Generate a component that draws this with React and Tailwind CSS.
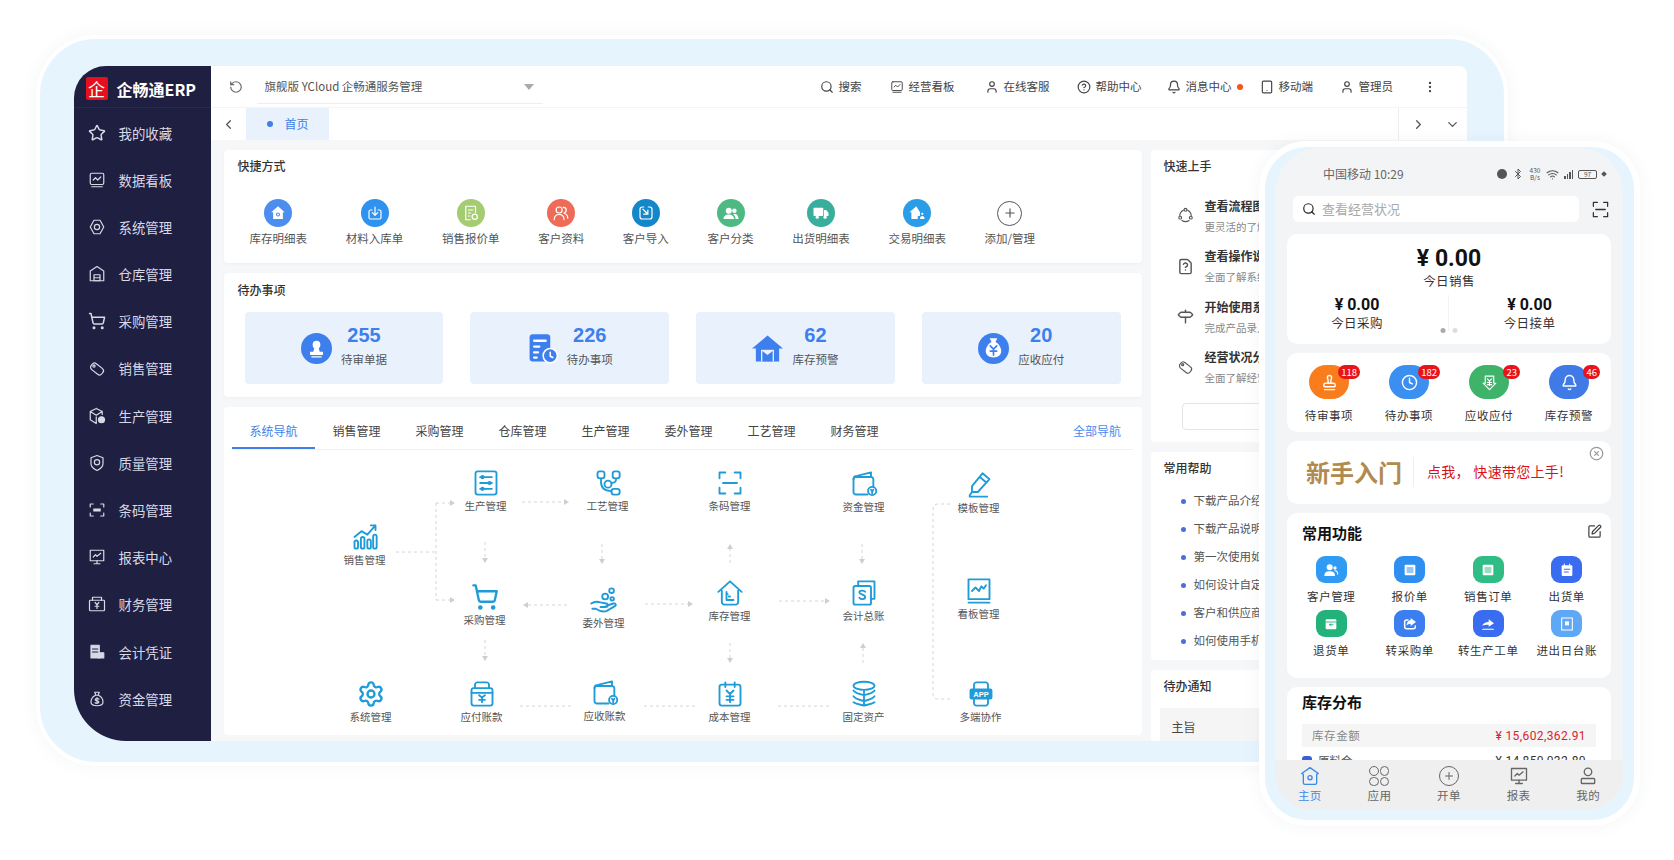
import {
  Star, ShoppingCart, ChevronLeft, ChevronRight, ChevronDown, RotateCw,
  Search, CircleHelp, Bell, Tablet, User, EllipsisVertical, Plus,
  Bluetooth, Wifi, SquarePen, CircleX, Clock, FileQuestion, Signpost, Settings, Stamp,
} from "lucide-react";

// small hand drawn icons, everything on a 24 box
const Svg = ({ className = "", children }) => (
  <svg viewBox="0 0 24 24" fill="none" stroke="currentColor" strokeWidth="1.6" strokeLinecap="round" strokeLinejoin="round" className={className}>
    {children}
  </svg>
);

// sidebar
const BoardIcon = (p) => (
  <Svg {...p}><rect x="3" y="3" width="18" height="15" rx="2" /><path d="M7 12l3-3 3 3 4-4M5 21h14" /></Svg>
);
const HexIcon = (p) => (
  <Svg {...p}><path d="M8 3h8l5 9-5 9H8l-5-9z" /><circle cx="12" cy="12" r="3.500" /></Svg>
);
const WarehouseIcon = (p) => (
  <Svg {...p}><path d="M12 2l9 6v13H3V8z" /><path d="M8 13h8v8H8zM8 17h8" /></Svg>
);
const DoubleTagIcon = (p) => (
  <Svg {...p}><rect x="3" y="7" width="18" height="10" rx="4" transform="rotate(38 12 12)" /><circle cx="8" cy="8" r="1.500" /></Svg>
);
const CubeIcon = (p) => (
  <Svg {...p}><path d="M11 2l8 4v4M11 2L3 6v11l8 5v-9M3 6l8 5 8-5" /><circle cx="18" cy="17" r="4" fill="currentColor" /></Svg>
);
const ShieldIcon = (p) => (
  <Svg {...p}><path d="M12 2l8 3v8c0 4-4 7-8 9-4-2-8-5-8-9V5z" /><circle cx="12" cy="11" r="3.500" /></Svg>
);
const ScanBarIcon = (p) => (
  <Svg {...p}><path d="M3 8V4h4M17 4h4v4M21 16v4h-4M7 20H3v-4" /><rect x="7" y="10" width="10" height="4" fill="currentColor" stroke="none" /></Svg>
);
const ScanIcon = (p) => (
  <Svg {...p}><path d="M3 8V3h5M16 3h5v5M21 16v5h-5M8 21H3v-5M6 12h12" /></Svg>
);
const ReportIcon = (p) => (
  <Svg {...p}><rect x="3" y="3" width="18" height="14" /><path d="M7 12l3-3 2 2 5-4M12 17v4M8 21h8" /></Svg>
);
const FinanceIcon = (p) => (
  <Svg {...p}><path d="M6 7V3h12v4" /><rect x="2" y="7" width="20" height="14" rx="1" /><path d="M9.500 10l2.500 3 2.500-3M12 13v5M9.500 15h5" /></Svg>
);
const VoucherIcon = (p) => (
  <Svg {...p}><rect x="4" y="3" width="11" height="17" fill="currentColor" /><rect x="14" y="13" width="7" height="7" fill="currentColor" /><path d="M6 8h7M6 12h7" stroke="#1f1f42" /></Svg>
);
const MoneyBagIcon = (p) => (
  <Svg {...p}><path d="M9 3h6l-1.500 4h-3zM10 7c-4 2-6 6-6 9 0 3 3 5 8 5s8-2 8-5c0-3-2-7-6-9" /><path d="M12 10v8M14.500 12c-1-1-5-1-5 1s5 1 5 3-4 2-5 1" /></Svg>
);

// navigation diagram
const SalesIcon = (p) => (
  <Svg {...p}><path d="M3 12l6-5 5 3 7-8M17 2h4v4" /><rect x="3" y="15" width="3" height="7" rx="1.500" /><rect x="8.500" y="12" width="3" height="10" rx="1.500" /><rect x="14" y="14" width="3" height="8" rx="1.500" /><rect x="19" y="10" width="3" height="12" rx="1.500" /></Svg>
);
const ProduceIcon = (p) => (
  <Svg {...p}><rect x="3" y="2" width="18" height="20" rx="2" /><path d="M7 7h10M7 12h10M7 17h10" /><circle cx="9" cy="7" r="1" /><circle cx="15" cy="12" r="1" /><circle cx="9" cy="17" r="1" /></Svg>
);
const CraftIcon = (p) => (
  <Svg {...p}><rect x="3" y="2" width="6" height="6" rx="2" /><rect x="16" y="2" width="6" height="6" rx="2" /><rect x="9" y="10" width="6" height="6" rx="3" /><rect x="15" y="17" width="7" height="5" rx="2" /><path d="M6 8v3c0 5 3 8 9 8M15 12c3 0 4-1 4-4" /></Svg>
);
const OutsourceIcon = (p) => (
  <Svg {...p}><circle cx="13" cy="9" r="2.500" /><circle cx="18.500" cy="4" r="2" /><circle cx="19" cy="11" r="1.500" /><path d="M1 15c3-2 5-2 8-1l5 1c2 0 2 3-1 3H9M14 17l6-2c2-.5 3 1.500 1 2.500l-7 4c-3 1-6 0-9-2H2" /></Svg>
);
const WalletIcon = (p) => (
  <Svg {...p}><path d="M3 8c0-2 1-3 3-3l12-3v4" /><path d="M20 14V8c0-1-1-2-2-2H5C4 6 3 7 3 8v11c0 1 1 2 2 2h10" /><circle cx="19" cy="18" r="3.500" /><path d="M18 17l1 1.500 1-1.500M19 18.500V20" /></Svg>
);
const StockIcon = (p) => (
  <Svg {...p}><path d="M2 11l10-9 10 9" /><path d="M5 10v10c0 1 1 2 2 2h10c1 0 2-1 2-2V10" /><path d="M9 11v7h6M9 13h1M11 15h1" /></Svg>
);
const LedgerIcon = (p) => (
  <Svg {...p}><path d="M7 5V2h14v15h-3" /><rect x="3" y="6" width="15" height="16" rx="1.500" /><path d="M13 11c-1-1.500-5-1.500-5 .5s5 1.500 5 4-4 2-5 .5" /></Svg>
);
const KanbanIcon = (p) => (
  <Svg {...p}><rect x="3" y="2" width="18" height="17" /><path d="M6 12l3-3 3 3 2-4 2 2 2-3M3 22h18" /></Svg>
);
const PencilIcon = (p) => (
  <Svg {...p}><path d="M15 2l6 5-10 11H6v-5zM12.500 5l6 5M6 18l-2 3" /><path d="M4 22h15" /></Svg>
);
const PayableIcon = (p) => (
  <Svg {...p}><path d="M6 7V4c0-1 1-2 2-2h8c1 0 2 1 2 2v3" /><rect x="3" y="7" width="18" height="15" rx="2" /><path d="M3 11h18M9.500 13l2.500 2 2.500-2M12 15v4M9.500 17h5" /></Svg>
);
const CostIcon = (p) => (
  <Svg {...p}><rect x="3" y="4" width="18" height="18" rx="2" /><path d="M8 2v4M16 2v4M9 9l3 3 3-3M12 12v7M9 14h6M9 17h6" /></Svg>
);
const AssetIcon = (p) => (
  <Svg {...p}><ellipse cx="12" cy="5" rx="9" ry="3.500" /><path d="M3 9c2 3 6 3 9 4 3-1 7-1 9-4M3 14c2 3 6 3 9 4 3-1 7-1 9-4M3 19c3 2 6 2 9 3 3-1 6-1 9-3M12 9v13" /></Svg>
);
const MultiIcon = (p) => (
  <Svg {...p}><path d="M6 8V4c0-1 1-2 2-2h8c1 0 2 1 2 2v4M6 16v4c0 1 1 2 2 2h8c1 0 2-1 2-2v-4" /><rect x="3" y="8" width="18" height="8" rx="1" fill="currentColor" /><text x="12" y="14.500" textAnchor="middle" fontSize="6.500" fontWeight="700" fill="#fff" stroke="none" fontFamily="Liberation Sans">APP</text></Svg>
);

// shortcuts row, white on a colored circle
const HouseSearchIcon = (p) => (
  <Svg {...p}><path d="M12 3L3 11h2.500v9h13v-9H21z" fill="#fff" stroke="none" /><circle cx="12" cy="14" r="2" stroke="#4b8ef0" strokeWidth="1.400" /></Svg>
);
const TrayIcon = (p) => (
  <Svg {...p}><path d="M8 8H6a2 2 0 0 0-2 2v8a2 2 0 0 0 2 2h12a2 2 0 0 0 2-2v-8a2 2 0 0 0-2-2h-2M12 4v11M8.500 11.500L12 15l3.500-3.500" /></Svg>
);
const DocClockIcon = (p) => (
  <Svg {...p}><path d="M18 11V3H5v18h6M8.500 8h6M8.500 12h3M8.500 16h2" /><circle cx="17" cy="17" r="3.500" /></Svg>
);
const TwoPeopleIcon = (p) => (
  <Svg {...p}><circle cx="9.500" cy="8" r="4" /><path d="M3 21c0-5 2-7 6.500-7s6.500 2 6.500 7M15 4.500c2.500 0 4 1.500 4 3.500s-1 3.500-3 4c3 1 5 3 5 7" /></Svg>
);
const ImportIcon = (p) => (
  <Svg {...p}><path d="M9 4H7a3 3 0 0 0-3 3v10a3 3 0 0 0 3 3h10a3 3 0 0 0 3-3V7a3 3 0 0 0-3-3h-2" /><path d="M8 7l6 6M14.500 8v5.500H9" /></Svg>
);
const PeopleFillIcon = (p) => (
  <Svg {...p}><circle cx="9" cy="9" r="4" fill="#fff" stroke="none" /><path d="M2 20c0-4 3-6 7-6s7 2 7 6z" fill="#fff" stroke="none" /><circle cx="16.500" cy="9" r="3" fill="#fff" stroke="none" /><path d="M17 13c3 0 5 3 5 7h-4c0-3-1-5-3-6z" fill="#fff" stroke="none" /></Svg>
);
const TruckFillIcon = (p) => (
  <Svg {...p}><rect x="2" y="5" width="13" height="11" rx="1" fill="#fff" stroke="none" /><path d="M16 8h3l3 4v4h-6z" fill="#fff" stroke="none" /><circle cx="7" cy="17.500" r="2.200" fill="#fff" stroke="none" /><circle cx="17.500" cy="17.500" r="2.200" fill="#fff" stroke="none" /></Svg>
);
const HouseFillIcon = (p) => (
  <Svg {...p}><path d="M11 3L2 11h2.500v9H13v-4h3v-5z" fill="#fff" stroke="none" /><circle cx="19" cy="13" r="1.500" fill="#fff" stroke="none" /><path d="M16 20c0-3 1-4 3-4s3 1 3 4z" fill="#fff" stroke="none" /></Svg>
);

// todo cards, solid blue
const TodoStamp = (p) => (
  <Svg {...p}><circle cx="12" cy="12" r="12" fill="#3d7fec" stroke="none" /><circle cx="12" cy="9" r="3" fill="#fff" stroke="none" /><path d="M10.500 11h3l1 3.500h-5zM7 14.500h10V17H7zM8 18h8v1H8z" fill="#fff" stroke="none" /></Svg>
);
const TodoDoc = (p) => (
  <Svg {...p}><rect x="2" y="1" width="16" height="21" rx="2.500" fill="#3d7fec" stroke="none" /><path d="M5.500 6h9M5.500 10.500h4M5.500 15h3M5.500 19h2" stroke="#fff" strokeWidth="1.800" /><circle cx="18" cy="17.500" r="5.500" fill="#3d7fec" stroke="#fff" strokeWidth="1.200" /><path d="M18 15v3l2 1" stroke="#fff" strokeWidth="1.200" /></Svg>
);
const TodoHouse = (p) => (
  <Svg {...p}><path d="M12 2L0 12h3v10h18V12h3z" fill="#3d7fec" stroke="none" /><rect x="7" y="13" width="10" height="9" fill="#e9f1fd" stroke="none" /><path d="M8 22v-8l4 3 4-3v8z" fill="#3d7fec" stroke="none" /></Svg>
);
const TodoBag = (p) => (
  <Svg {...p}><circle cx="12" cy="12" r="12" fill="#3d7fec" stroke="none" /><path d="M9 4h6l-1.500 3c3 1.500 4.500 5 4.500 7 0 3-2.500 5-6 5s-6-2-6-5c0-2 1.500-5.500 4.500-7z" fill="#fff" stroke="none" /><path d="M9.500 10l2.500 2.500 2.500-2.500M12 12.500V17M9.500 14h5" stroke="#3d7fec" strokeWidth="1.300" /></Svg>
);

// phone
const PhoneDoc = ({ className, line }) => (
  <Svg className={className}><rect x="4" y="4" width="16" height="16" rx="1.500" fill="#fff" stroke="none" /><path d="M7.500 9h9M7.500 12h9M7.500 15h9" stroke={line} /></Svg>
);
const QuoteIcon = (p) => <PhoneDoc {...p} line="#2f8ff0" />;
const OrderIcon = (p) => <PhoneDoc {...p} line="#2fbd85" />;
const ShipIcon = (p) => (
  <Svg {...p}><rect x="4" y="5" width="16" height="16" rx="1.500" fill="#fff" stroke="none" /><path d="M8 11h8M8 15h6" stroke="#3a6cf0" /><path d="M8 3v2M16 3v2" stroke="#fff" /></Svg>
);
const ReturnIcon = (p) => (
  <Svg {...p}><rect x="4" y="5" width="16" height="15" rx="1.500" fill="#fff" stroke="none" /><path d="M4 9h16M10 13l2-1.500M10 13l2 1.500M10 13h5" stroke="#22b27a" strokeWidth="1.300" /></Svg>
);
const ShareBoxIcon = (p) => (
  <Svg {...p}><path d="M9 6H7a3 3 0 0 0-3 3v7a3 3 0 0 0 3 3h10a3 3 0 0 0 3-3v-1" strokeWidth="2.200" /><path d="M13 3l8 6-8 6v-3.500c-3 0-5 1-6 3 0-4.500 2-8 6-8z" fill="#fff" stroke="none" /></Svg>
);
const ArrowBarIcon = (p) => (
  <Svg {...p}><path d="M3 15c2-4 5-6 10-6V5l8 6-8 5v-3c-4 0-7 0-10 2z" fill="#fff" stroke="none" /><path d="M4 20h16" /></Svg>
);
const SafeIcon = (p) => (
  <Svg {...p}><rect x="4" y="3" width="16" height="18" /><rect x="9" y="8" width="6" height="6" fill="#fff" stroke="none" /></Svg>
);
const ClientIcon = (p) => (
  <Svg {...p}><circle cx="10" cy="8" r="4.500" fill="#fff" stroke="none" /><path d="M2 21c0-5 3-7 8-7s8 2 8 7z" fill="#fff" stroke="none" /><circle cx="18" cy="9" r="2.500" fill="#fff" stroke="none" /><path d="M18 13c2 0 4 2 4 5" /></Svg>
);
const ShieldYenIcon = (p) => (
  <Svg {...p}><path d="M6 3h12v10h3l-9 9-9-9h3z" /><path d="M9 7l3 3 3-3M12 10v6M9 12h6M9 15h6" /></Svg>
);
const PhoneHomeIcon = (p) => (
  <Svg {...p}><path d="M12 2L2 9l2 1v10c0 1 1 2 2 2h12c1 0 2-1 2-2V10l2-1z" /><circle cx="12" cy="14" r="2.500" /></Svg>
);
const PhoneMineIcon = (p) => (
  <Svg {...p}><circle cx="12" cy="7" r="4.500" /><rect x="4" y="15" width="16" height="6" rx="1" /></Svg>
);
const CycleIcon = (p) => (
  <Svg {...p}><path d="M9 4.500C6 6 4 8.500 4 12M15 4.500c3 1.500 5 4 5 7.500M7 19c3 2 7 2 10 0" /><circle cx="12" cy="4" r="2" /><circle cx="4.500" cy="15" r="2" /><circle cx="19.500" cy="15" r="2" /></Svg>
);

const sidebarItems = [
  ["我的收藏", Star], ["数据看板", BoardIcon], ["系统管理", HexIcon], ["仓库管理", WarehouseIcon],
  ["采购管理", ShoppingCart], ["销售管理", DoubleTagIcon], ["生产管理", CubeIcon], ["质量管理", ShieldIcon],
  ["条码管理", ScanBarIcon], ["报表中心", ReportIcon], ["财务管理", FinanceIcon], ["会计凭证", VoucherIcon], ["资金管理", MoneyBagIcon],
];

const headerItems = [
  ["搜索", Search, "w-[70px]"], ["经营看板", BoardIcon, "w-[95px]"], ["在线客服", User, "w-[92px]"],
  ["帮助中心", CircleHelp, "w-[90px]"], ["消息中心", Bell, "w-[93px]"], ["移动端", Tablet, "w-[80px]"], ["管理员", User, "w-[83px]"],
];

const quickItems = [
  ["库存明细表", HouseSearchIcon, "bg-[#4b8ef0]"], ["材料入库单", TrayIcon, "bg-[#2f92ee]"], ["销售报价单", DocClockIcon, "bg-[#a5cc70]"],
  ["客户资料", TwoPeopleIcon, "bg-[#ee6c57]"], ["客户导入", ImportIcon, "bg-[#1487c9]"], ["客户分类", PeopleFillIcon, "bg-[#4dba84]"],
  ["出货明细表", TruckFillIcon, "bg-[#3aae9d]"], ["交易明细表", HouseFillIcon, "bg-[#2a9ce8]"],
];

const todoItems = [
  ["255", "待审单据", TodoStamp],
  ["226", "待办事项", TodoDoc],
  ["62", "库存预警", TodoHouse],
  ["20", "应收应付", TodoBag],
];

const navTabs = ["系统导航", "销售管理", "采购管理", "仓库管理", "生产管理", "委外管理", "工艺管理", "财务管理"];

// nodes of the navigation diagram, positions are relative to the card
const navNodes = [
  ["销售管理", SalesIcon, "left-[141px] top-[116px]"],
  ["生产管理", ProduceIcon, "left-[262px] top-[62px]"],
  ["采购管理", ShoppingCart, "left-[261px] top-[176px]"],
  ["系统管理", Settings, "left-[147px] top-[273px]"],
  ["应付账款", PayableIcon, "left-[258px] top-[273px]"],
  ["工艺管理", CraftIcon, "left-[384px] top-[62px]"],
  ["委外管理", OutsourceIcon, "left-[380px] top-[179px]"],
  ["应收账款", WalletIcon, "left-[381px] top-[272px]"],
  ["条码管理", ScanIcon, "left-[506px] top-[62px]"],
  ["库存管理", StockIcon, "left-[506px] top-[172px]"],
  ["成本管理", CostIcon, "left-[506px] top-[273px]"],
  ["资金管理", WalletIcon, "left-[640px] top-[63px]"],
  ["会计总账", LedgerIcon, "left-[640px] top-[172px]"],
  ["固定资产", AssetIcon, "left-[640px] top-[273px]"],
  ["模板管理", PencilIcon, "left-[755px] top-[64px]"],
  ["看板管理", KanbanIcon, "left-[755px] top-[170px]"],
  ["多端协作", MultiIcon, "left-[757px] top-[273px]"],
];

const startItems = [
  ["查看流程图", "更灵活的了解系统", CycleIcon],
  ["查看操作说明", "全面了解系统功能", FileQuestion],
  ["开始使用系统", "完成产品录入", Signpost],
  ["经营状况分析", "全面了解经营状况", DoubleTagIcon],
];

const helpItems = ["下载产品介绍", "下载产品说明", "第一次使用如何", "如何设计自定义", "客户和供应商", "如何使用手机"];

const phoneBadges = [
  ["待审事项", "118", Stamp, "bg-[#f97d1c] rounded-[18px]"],
  ["待办事项", "182", Clock, "bg-[#3b8ff0] rounded-full"],
  ["应收应付", "23", ShieldYenIcon, "bg-[#3fb36a] rounded-full"],
  ["库存预警", "46", Bell, "bg-[#3f7ae6] rounded-full"],
];

const phoneFuncs = [
  ["客户管理", ClientIcon, "bg-[#2f9bf5]"], ["报价单", QuoteIcon, "bg-[#2f8ff0]"], ["销售订单", OrderIcon, "bg-[#2fbd85]"], ["出货单", ShipIcon, "bg-[#3a6cf0]"],
  ["退货单", ReturnIcon, "bg-[#22b27a]"], ["转采购单", ShareBoxIcon, "bg-[#3a7ef0]"], ["转生产工单", ArrowBarIcon, "bg-[#3a6cf0]"], ["进出日台账", SafeIcon, "bg-[#5ea8f5]"],
];

const phoneTabs = [
  ["主页", PhoneHomeIcon], ["应用", null], ["开单", null], ["报表", ReportIcon], ["我的", PhoneMineIcon],
];

const Arrow = ({ d, pts }) => (
  <g>
    <path d={d} strokeDasharray="3 3" />
    <polygon points={pts} fill="#cfcfcf" stroke="none" />
  </g>
);

const Connectors = () => (
  <svg viewBox="224 407 917 328" fill="none" stroke="#d6d6d6" className="absolute left-0 top-0 w-[917px] h-[328px] pointer-events-none">
    <path d="M396 552H436M436 503V600" strokeDasharray="3 3" />
    <Arrow d="M436 503H450" pts="450,500 455,503 450,506" />
    <Arrow d="M436 600H450" pts="450,597 455,600 450,603" />
    <Arrow d="M522 502H564" pts="564,499 569,502 564,505" />
    <Arrow d="M485 542V558" pts="482,558 485,563 488,558" />
    <Arrow d="M567 605H528" pts="528,602 523,605 528,608" />
    <Arrow d="M485 640V656" pts="482,656 485,661 488,656" />
    <path d="M520 706H572M644 706H695M778 706H829" strokeDasharray="3 3" />
    <Arrow d="M602 544V559" pts="599,559 602,564 605,559" />
    <Arrow d="M730 563V549" pts="727,549 730,544 733,549" />
    <Arrow d="M862 544V559" pts="859,559 862,564 865,559" />
    <Arrow d="M645 604H688" pts="688,601 693,604 688,607" />
    <Arrow d="M779 601H825" pts="825,598 830,601 825,604" />
    <Arrow d="M730 643V658" pts="727,658 730,663 733,658" />
    <Arrow d="M863 663V648" pts="860,648 863,643 866,648" />
    <path d="M950 504H938Q933 504 933 509V694Q933 699 938 699H950" strokeDasharray="3 3" />
  </svg>
);

const Sidebar = () => (
  <aside className="w-[137px] shrink-0 bg-[#1f1f42] rounded-tl-[32px] rounded-bl-[52px] flex flex-col overflow-hidden">
    <div className="h-[42px] flex items-center pl-[12px] pt-[4px] gap-[9px] border-b border-[#2a2a4e]">
      <div className="w-[22px] h-[23px] bg-[#e60f1e] rounded-[2px] flex items-center justify-center text-white text-[17px] leading-none">企</div>
      <span className="text-white text-[16px] font-bold whitespace-nowrap">企畅通ERP</span>
    </div>
    <div className="flex flex-col pt-[1px]">
      {sidebarItems.map(([name, Icon]) => (
        <div key={name} className="h-[47.2px] flex items-center pl-[14px] gap-[13px] text-[#d9d9e6]">
          <Icon className="w-[18px] h-[18px]" />
          <span className="text-[13.4px]">{name}</span>
        </div>
      ))}
    </div>
  </aside>
);

const TopBar = () => (
  <div className="h-[42px] bg-white flex items-center pl-[18px] border-b border-[#f3f4f5] rounded-tr-[8px]">
    <RotateCw className="w-[14px] h-[14px] text-[#666] -scale-x-100" />
    <div className="ml-[14px] w-[286px] h-[34px] border-b border-[#eeeeee] flex items-center justify-between pl-[8px] pr-[9px] mt-[1px]">
      <span className="text-[11.500px] text-[#555] whitespace-nowrap">旗舰版 YCloud 企畅通服务管理</span>
      <span className="w-0 h-0 border-x-[5px] border-x-transparent border-t-[6px] border-t-[#aaaaaa]" />
    </div>
    <div className="ml-[277px] flex items-center">
      {headerItems.map(([name, Icon, w]) => (
        <div key={name} className={`${w} flex items-center gap-[5px] text-[#444]`}>
          <Icon className="w-[14px] h-[14px] shrink-0" />
          <span className="text-[11.500px] whitespace-nowrap">{name}</span>
          {name === "消息中心" && <span className="w-[6px] h-[6px] rounded-full bg-[#f2561d]" />}
        </div>
      ))}
      <EllipsisVertical className="w-[14px] h-[14px] text-[#444]" />
    </div>
  </div>
);

const TabBar = () => (
  <div className="h-[32px] bg-white flex items-center">
    <div className="w-[35px] flex justify-center"><ChevronLeft className="w-[15px] h-[15px] text-[#555]" /></div>
    <div className="w-[83px] h-full bg-[#e9f1fd] flex items-center pl-[21px] gap-[12px] text-[#3f7fe8]">
      <span className="w-[6px] h-[6px] rounded-full bg-[#3f7fe8]" />
      <span className="text-[12px]">首页</span>
    </div>
    <div className="flex-1" />
    <div className="w-[69px] h-full border-l border-[#eeeeee] flex items-center justify-between pl-[12px] pr-[7px] text-[#555]">
      <ChevronRight className="w-[15px] h-[15px]" />
      <ChevronDown className="w-[15px] h-[15px]" />
    </div>
  </div>
);

const QuickCard = () => (
  <section className="h-[113px] bg-white rounded-[4px] shadow-[0_1px_3px_rgba(0,0,0,0.04)] px-[14px] pt-[7px] shrink-0">
    <h3 className="text-[12px] leading-[18px] font-medium text-[#333]">快捷方式</h3>
    <div className="flex gap-[38.700px] pl-[12px] mt-[24px]">
      {quickItems.map(([name, Icon, bg]) => (
        <div key={name} className="flex flex-col items-center gap-[3px]">
          <div className={`w-[28px] h-[28px] rounded-full ${bg} flex items-center justify-center text-white`}>
            <Icon className="w-[18px] h-[18px]" />
          </div>
          <span className="text-[11.500px] leading-[16px] text-[#555] whitespace-nowrap">{name}</span>
        </div>
      ))}
      <div className="flex flex-col items-center gap-[3px]">
        <div className="w-[25px] h-[25px] mt-[1.500px] mb-[1.500px] rounded-full border-[1.500px] border-[#555] flex items-center justify-center text-[#555]">
          <Plus className="w-[14px] h-[14px]" />
        </div>
        <span className="text-[11.500px] leading-[16px] text-[#555] whitespace-nowrap">添加/管理</span>
      </div>
    </div>
  </section>
);

const TodoCard = () => (
  <section className="h-[124px] bg-white rounded-[4px] shadow-[0_1px_3px_rgba(0,0,0,0.04)] px-[21px] pt-[8px] shrink-0">
    <h3 className="text-[12px] leading-[18px] font-medium text-[#333] -ml-[7px]">待办事项</h3>
    <div className="grid grid-cols-4 gap-[27px] mt-[13px]">
      {todoItems.map(([num, label, Icon]) => (
        <div key={label} className="h-[72px] bg-[#e9f1fd] rounded-[4px] flex items-center justify-center gap-[9px]">
          <Icon className="w-[31px] h-[31px]" />
          <div className="flex flex-col items-center w-[46px] pb-[6px]">
            <span className="[font-family:'Liberation_Sans',sans-serif] text-[20px] leading-[24px] font-bold text-[#3d7fec]">{num}</span>
            <span className="text-[11.500px] leading-[16px] mt-[4px] text-[#555] whitespace-nowrap">{label}</span>
          </div>
        </div>
      ))}
    </div>
  </section>
);

const NavCard = () => (
  <section className="relative h-[328px] bg-white rounded-[4px] overflow-hidden shrink-0">
    <div className="flex items-end mx-[8.500px] mt-[8px] h-[35px] border-b border-[#f0f0f0]">
      {navTabs.map((t, i) => (
        <div key={t} className={i === 0 ? "w-[83px] h-full flex items-center justify-center text-[12px] text-[#3f7fe8] border-b-2 border-[#3f7fe8]" : "w-[83px] h-full flex items-center justify-center text-[12px] text-[#444] border-b-2 border-transparent"}>{t}</div>
      ))}
      <div className="flex-1 h-full flex items-center justify-end pr-[12px] pb-[2px] text-[12px] text-[#4a8bf0]">全部导航</div>
    </div>
    <Connectors />
    {navNodes.map(([name, Icon, pos]) => (
      <div key={name + pos} className={`absolute ${pos} -translate-x-1/2 flex flex-col items-center gap-[1px]`}>
        <Icon className="w-[28px] h-[28px] text-[#1f9bd8]" />
        <span className="text-[10.500px] leading-[16px] text-[#555] whitespace-nowrap">{name}</span>
      </div>
    ))}
  </section>
);

const RightColumn = () => (
  <div className="w-[310px] shrink-0 flex flex-col gap-[10px]">
    <section className="h-[292px] bg-white rounded-[4px] px-[13px] pt-[7px] shrink-0">
      <h3 className="text-[12px] leading-[18px] font-medium text-[#333]">快速上手</h3>
      <div className="flex flex-col gap-[9.500px] mt-[20px]">
        {startItems.map(([title, sub, Icon]) => (
          <div key={title} className="flex items-center h-[41px]">
            <Icon className="w-[17px] h-[17px] ml-[13px] text-[#555]" />
            <div className="ml-[11px]">
              <div className="text-[12px] leading-[18px] font-bold text-[#333]">{title}</div>
              <div className="text-[10.500px] leading-[16px] mt-[4px] text-[#888]">{sub}</div>
            </div>
          </div>
        ))}
      </div>
      <div className="h-[27px] mx-[18px] mt-[15px] rounded-[4px] border border-[#e4e4e4]" />
    </section>
    <section className="h-[208px] bg-white rounded-[4px] px-[13px] pt-[7px] shrink-0">
      <h3 className="text-[12px] leading-[18px] font-medium text-[#333]">常用帮助</h3>
      <ul className="flex flex-col mt-[10px]">
        {helpItems.map((h) => (
          <li key={h} className="h-[28px] flex items-center pl-[17px] gap-[8px] text-[11.500px] text-[#555]">
            <span className="w-[5px] h-[5px] rounded-full bg-[#4a6fd8]" />
            {h}
          </li>
        ))}
      </ul>
    </section>
    <section className="flex-1 min-h-0 bg-white rounded-[4px] pt-[7px] overflow-hidden">
      <h3 className="text-[12px] leading-[18px] font-medium text-[#333] px-[13px]">待办通知</h3>
      <div className="mx-[9px] mt-[13px] h-[40px] bg-[#f5f5f5] pl-[12px] pt-[10px] text-[12px] leading-[18px] text-[#444]">主旨</div>
    </section>
  </div>
);

const Desktop = () => (
  <div className="absolute left-[36px] top-[35px] w-[1472px] h-[731px] rounded-[60px] border-[4px] border-white bg-[#e6f4fe] shadow-[0_0_16px_rgba(120,130,150,0.08)] pl-[33.600px] pt-[27px] pr-[37px] pb-[21px]">
    <div className="h-full flex overflow-hidden">
      <Sidebar />
      <div className="flex-1 min-w-0 flex flex-col">
        <TopBar />
        <TabBar />
        <div className="flex-1 min-h-0 bg-[#f6f7f8] flex gap-[9px] pl-[13px] pt-[10px] overflow-hidden">
          <div className="w-[918px] shrink-0 flex flex-col gap-[10px]">
            <QuickCard />
            <TodoCard />
            <NavCard />
          </div>
          <RightColumn />
        </div>
      </div>
    </div>
  </div>
);

const StatusBar = () => (
  <div className="h-[40px] flex items-center justify-between pl-[48px] pr-[17px] pt-[12px] shrink-0">
    <span className="text-[12px] text-[#666]">中国移动 10:29</span>
    <div className="flex items-center gap-[5px] text-[#555]">
      <span className="w-[10px] h-[10px] rounded-full bg-[#555]" />
      <Bluetooth className="w-[12px] h-[12px]" />
      <span className="text-[6.500px] leading-[7px] w-[12px] text-center">430 B/s</span>
      <Wifi className="w-[13px] h-[13px]" />
      <span className="flex items-end gap-[1px] h-[9px]">
        <span className="w-[1.500px] h-[3px] bg-[#555]" />
        <span className="w-[1.500px] h-[5px] bg-[#555]" />
        <span className="w-[1.500px] h-[7px] bg-[#555]" />
        <span className="w-[1.500px] h-[9px] bg-[#555]" />
      </span>
      <span className="w-[19px] h-[9px] border border-[#555] rounded-[2px] text-[6.500px] leading-[7px] text-center">97</span>
      <span className="w-[4px] h-[4px] rotate-45 bg-[#555]" />
    </div>
  </div>
);

const PhoneSales = () => (
  <section className="relative h-[110px] bg-white rounded-[10px] mx-[12px] shrink-0 flex flex-col items-center pt-[11px]">
    <div className="[font-family:Roboto,sans-serif] text-[23px] leading-[28px] font-bold text-[#111]">¥ 0.00</div>
    <div className="text-[12.500px] leading-[18px] text-[#333] -mt-[1px] tracking-[0.4px]">今日销售</div>
    <div className="w-full grid grid-cols-2 mt-[5px]">
      <div className="flex flex-col items-center -translate-x-[1px] pr-[20px]">
        <span className="[font-family:Roboto,sans-serif] text-[16px] leading-[19px] font-bold text-[#111]">¥ 0.00</span>
        <span className="text-[12.500px] leading-[17px] text-[#333] tracking-[0.4px]">今日采购</span>
      </div>
      <div className="flex flex-col items-center border-l border-[#f3f3f3] -translate-x-[1px]">
        <span className="[font-family:Roboto,sans-serif] text-[16px] leading-[19px] font-bold text-[#111]">¥ 0.00</span>
        <span className="text-[12.500px] leading-[17px] text-[#333] tracking-[0.4px]">今日接单</span>
      </div>
    </div>
    <div className="absolute bottom-[11px] left-1/2 -translate-x-1/2 flex gap-[7px]">
      <span className="w-[5px] h-[5px] rounded-full bg-[#aaaaaa]" />
      <span className="w-[5px] h-[5px] rounded-full bg-[#dddddd]" />
    </div>
  </section>
);

const PhoneBadges = () => (
  <section className="h-[79px] bg-white rounded-[10px] mx-[12px] shrink-0 grid grid-cols-4 px-[2px] pt-[12px]">
    {phoneBadges.map(([name, num, Icon, bg]) => (
      <div key={name} className="flex flex-col items-center">
        <div className={`relative w-[40px] h-[34px] ${bg} flex items-center justify-center text-white`}>
          <Icon className="w-[17px] h-[17px]" />
          <span className="absolute top-0 -right-[11px] min-w-[14px] h-[14px] px-[3px] rounded-full bg-[#e8141c] text-white text-[9.500px] leading-[14px] text-center">{num}</span>
        </div>
        <span className="mt-[8px] text-[11.500px] leading-[16px] text-[#333] tracking-[0.6px] whitespace-nowrap">{name}</span>
      </div>
    ))}
  </section>
);

const PhoneBanner = () => (
  <section className="relative h-[63px] bg-white rounded-[10px] mx-[12px] shrink-0 flex items-center pl-[19px] pb-[2px]">
    <span className="text-[24px] leading-[30px] font-bold text-[#b08a4e]">新手入门</span>
    <span className="w-px h-[30px] bg-[#eeeeee] ml-[11px] mr-[13px]" />
    <span className="text-[14px] tracking-[0.3px] text-[#d8121a] whitespace-nowrap">点我， 快速带您上手!</span>
    <CircleX className="absolute right-[7px] top-[5px] w-[15px] h-[15px] text-[#999]" />
  </section>
);

const PhoneFuncs = () => (
  <section className="h-[165px] bg-white rounded-[10px] mx-[12px] shrink-0 pt-[9px]">
    <div className="flex items-center justify-between pl-[15px] pr-[9px] h-[22px]">
      <span className="text-[15px] font-bold text-[#111]">常用功能</span>
      <SquarePen className="w-[15px] h-[15px] text-[#444] -mt-[4px]" />
    </div>
    <div className="grid grid-cols-4 gap-y-[3px] px-[5px] mt-[12px]">
      {phoneFuncs.map(([name, Icon, bg]) => (
        <div key={name} className="flex flex-col items-center">
          <div className={`w-[31px] h-[27px] rounded-[9px] ${bg} flex items-center justify-center text-white`}>
            <Icon className="w-[16px] h-[16px]" />
          </div>
          <span className="mt-[3px] text-[11.500px] leading-[21px] text-[#333] tracking-[0.6px] whitespace-nowrap">{name}</span>
        </div>
      ))}
    </div>
  </section>
);

const PhoneStock = () => (
  <section className="bg-white rounded-t-[10px] mx-[12px] shrink-0 pt-[4px] px-[15px] h-[120px]">
    <div className="text-[15px] leading-[22px] font-bold text-[#111]">库存分布</div>
    <div className="mt-[11px] h-[23px] bg-[#f5f5f5] flex items-center justify-between px-[10px] text-[11.500px]">
      <span className="text-[#888] tracking-[0.6px]">库存金额</span>
      <span className="text-[#d8232f] [font-family:Roboto,sans-serif] text-[12px] tracking-[0.4px]">¥ 15,602,362.91</span>
    </div>
    <div className="h-[24px] flex items-center justify-between pr-[10px] text-[11.500px] mt-[2px]">
      <span className="flex items-center gap-[6px] text-[#555]"><span className="w-[10px] h-[10px] rounded-[3px] bg-[#3a5fd8]" />原料仓</span>
      <span className="text-[#333] [font-family:Roboto,sans-serif] text-[12px] tracking-[0.4px]">¥ 14,850,032.80</span>
    </div>
  </section>
);

const Phone = () => (
  <div className="absolute left-[1259px] top-[141px] w-[381px] h-[685px] rounded-[48px] border-[6px] border-white bg-[#e6f4fe] shadow-[0_0_16px_rgba(120,130,150,0.08)] px-[10px] pt-[1px]">
    <div className="w-[348px] h-[662px] bg-[#f3f4f6] rounded-t-[44px] rounded-b-[36px] flex flex-col overflow-hidden">
      <div className="flex-1 min-h-0 flex flex-col overflow-hidden">
        <StatusBar />
        <div className="flex items-center ml-[18px] mt-[8px] mb-[12px] shrink-0">
          <div className="w-[286px] h-[26px] bg-white rounded-[6px] flex items-center pl-[9px] gap-[6px]">
            <Search className="w-[14px] h-[14px] text-[#222]" />
            <span className="text-[13px] text-[#aaaaaa]">查看经营状况</span>
          </div>
          <ScanIcon className="w-[19px] h-[19px] text-[#333] ml-[12px]" />
        </div>
        <div className="flex flex-col gap-[9px]">
          <PhoneSales />
          <PhoneBadges />
          <PhoneBanner />
          <PhoneFuncs />
          <PhoneStock />
        </div>
      </div>
      <div className="h-[50px] shrink-0 bg-[#efeff0] grid grid-cols-5 pt-[6px]">
        {phoneTabs.map(([name, Icon], i) => (
          <div key={name} className={i === 0 ? "flex flex-col items-center text-[#3b8ae6]" : "flex flex-col items-center text-[#666]"}>
            {Icon && <Icon className="w-[20px] h-[20px]" />}
            {name === "应用" && (
              <span className="w-[20px] h-[20px] grid grid-cols-2 gap-[1px]">
                <span className="border border-[#666] rounded-full" />
                <span className="border border-[#666] rounded-full" />
                <span className="border border-[#666] rounded-full" />
                <span className="border border-[#666] rounded-full" />
              </span>
            )}
            {name === "开单" && (
              <span className="w-[20px] h-[20px] rounded-full border border-[#666] flex items-center justify-center"><Plus className="w-[12px] h-[12px]" /></span>
            )}
            <span className="text-[11.500px] leading-[16px] mt-[1px] tracking-[0.4px]">{name}</span>
          </div>
        ))}
      </div>
    </div>
  </div>
);

export default function App() {
  return (
    <div className="relative w-[1674px] h-[860px] bg-white overflow-hidden [font-family:'Noto_Sans_CJK_SC','Liberation_Sans',sans-serif]">
      <Desktop />
      <Phone />
    </div>
  );
}
